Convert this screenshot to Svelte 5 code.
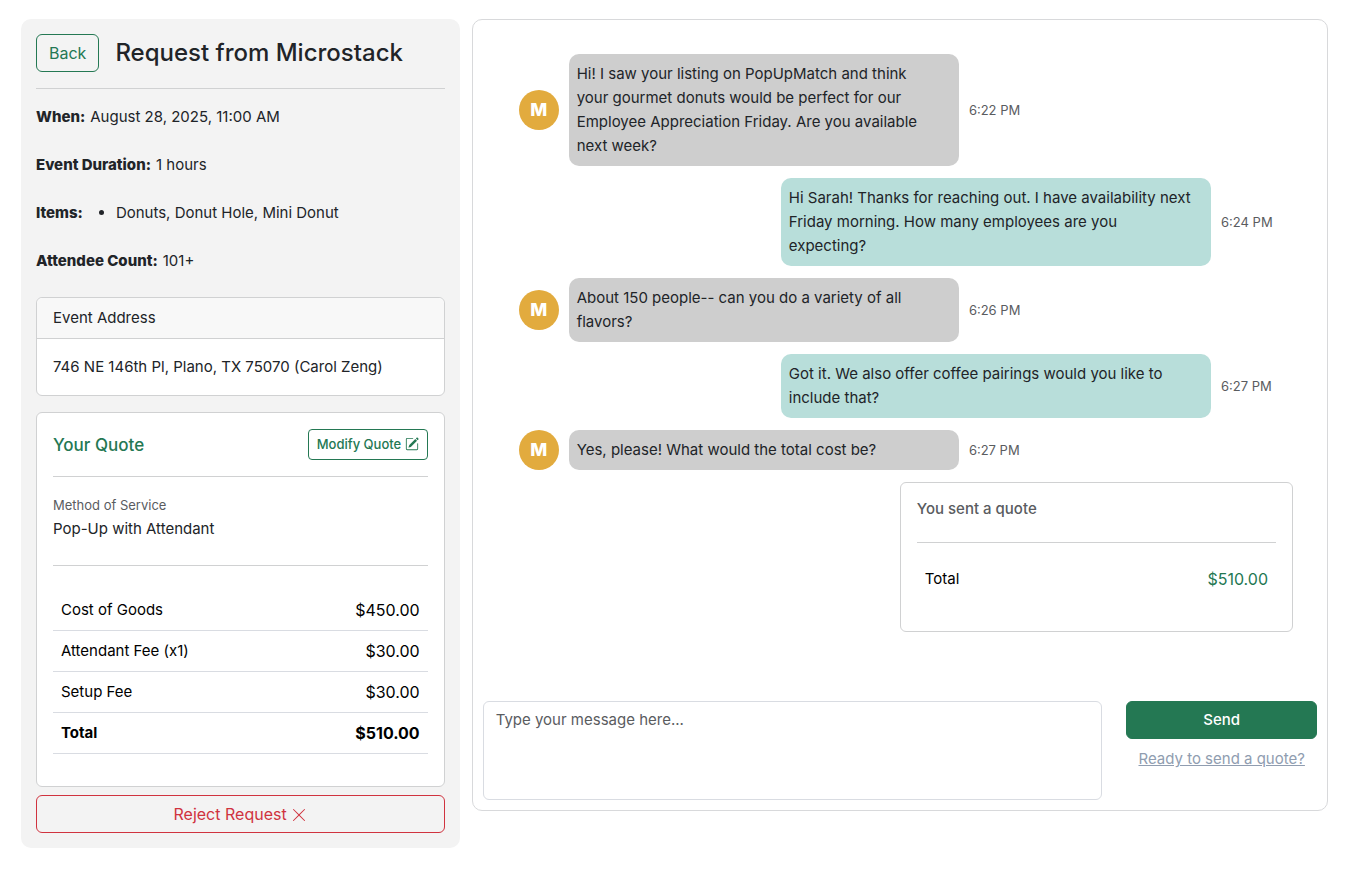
<script lang="ts">
  interface Message {
    sent: boolean;
    text: string;
    time: string;
  }

  const details = [
    { label: "When:", value: "August 28, 2025, 11:00 AM" },
    { label: "Event Duration:", value: "1 hours" },
    { label: "Items:", items: ["Donuts, Donut Hole, Mini Donut"] },
    { label: "Attendee Count:", value: "101+" },
  ];

  const fees = [
    { name: "Cost of Goods", amount: 450 },
    { name: "Attendant Fee (x1)", amount: 30 },
    { name: "Setup Fee", amount: 30 },
  ];

  const total = fees.reduce((sum, fee) => sum + fee.amount, 0);

  let messages = $state<Message[]>([
    {
      sent: false,
      text: "Hi! I saw your listing on PopUpMatch and think your gourmet donuts would be perfect for our Employee Appreciation Friday. Are you available next week?",
      time: "6:22 PM",
    },
    {
      sent: true,
      text: "Hi Sarah! Thanks for reaching out. I have availability next Friday morning. How many employees are you expecting?",
      time: "6:24 PM",
    },
    { sent: false, text: "About 150 people-- can you do a variety of all flavors?", time: "6:26 PM" },
    { sent: true, text: "Got it. We also offer coffee pairings would you like to include that?", time: "6:27 PM" },
    { sent: false, text: "Yes, please! What would the total cost be?", time: "6:27 PM" },
  ]);

  let draft = $state("");

  const money = (n: number) => `$${n.toFixed(2)}`;

  function send() {
    const text = draft.trim();
    if (!text) return;
    const time = new Date().toLocaleTimeString("en-US", { hour: "numeric", minute: "2-digit" });
    messages.push({ sent: true, text, time });
    draft = "";
  }
</script>

<main class="page">
  <aside class="sidebar">
    <header class="sidebar-header">
      <button class="btn btn-outline" type="button">Back</button>
      <h1>Request from Microstack</h1>
    </header>
    <hr />

    <div class="details">
      {#each details as detail}
        <div class="detail">
          <strong>{detail.label}</strong>
          {#if detail.items}
            <ul>
              {#each detail.items as item}
                <li>{item}</li>
              {/each}
            </ul>
          {:else}
            <span>{detail.value}</span>
          {/if}
        </div>
      {/each}
    </div>

    <section class="card address">
      <div class="card-header">Event Address</div>
      <div class="card-body">746 NE 146th Pl, Plano, TX 75070 (Carol Zeng)</div>
    </section>

    <section class="card quote" id="quote">
      <div class="quote-header">
        <h2>Your Quote</h2>
        <button class="btn btn-outline btn-sm" type="button">
          Modify Quote
          <svg class="icon" viewBox="0 0 16 16" fill="currentColor" aria-hidden="true">
            <path d="M15.502 1.94a.5.5 0 0 1 0 .706L14.459 3.69l-2-2L13.502.646a.5.5 0 0 1 .707 0l1.293 1.293zm-1.75 2.456-2-2L4.939 9.21a.5.5 0 0 0-.121.196l-.805 2.414a.25.25 0 0 0 .316.316l2.414-.805a.5.5 0 0 0 .196-.12l6.813-6.814z" />
            <path fill-rule="evenodd" d="M1 13.5A1.5 1.5 0 0 0 2.5 15h11a1.5 1.5 0 0 0 1.5-1.5v-6a.5.5 0 0 0-1 0v6a.5.5 0 0 1-.5.5h-11a.5.5 0 0 1-.5-.5v-11a.5.5 0 0 1 .5-.5H9a.5.5 0 0 0 0-1H2.5A1.5 1.5 0 0 0 1 2.5z" />
          </svg>
        </button>
      </div>
      <hr />
      <div class="method">
        <div class="method-label">Method of Service</div>
        <div>Pop-Up with Attendant</div>
      </div>
      <hr />
      <table class="fees">
        <tbody>
          {#each fees as fee}
            <tr>
              <td>{fee.name}</td>
              <td class="amount">{money(fee.amount)}</td>
            </tr>
          {/each}
          <tr class="total">
            <td>Total</td>
            <td class="amount">{money(total)}</td>
          </tr>
        </tbody>
      </table>
    </section>

    <button class="btn btn-danger" type="button">
      Reject Request
      <svg class="icon icon-x" viewBox="0 0 16 16" fill="currentColor" aria-hidden="true">
        <path d="M2.146 2.854a.5.5 0 1 1 .708-.708L8 7.293l5.146-5.147a.5.5 0 0 1 .708.708L8.707 8l5.147 5.146a.5.5 0 0 1-.708.708L8 8.707l-5.146 5.147a.5.5 0 0 1-.708-.708L7.293 8z" />
      </svg>
    </button>
  </aside>

  <section class="chat">
    <div class="messages">
      {#each messages as message}
        <div class="message" class:sent={message.sent}>
          {#if !message.sent}
            <div class="avatar">M</div>
          {/if}
          <div class="bubble">{message.text}</div>
          <time>{message.time}</time>
        </div>
      {/each}

      <div class="card sent-quote">
        <h3>You sent a quote</h3>
        <hr />
        <div class="sent-total">
          <span>Total</span>
          <span class="sent-amount">{money(total)}</span>
        </div>
      </div>
    </div>

    <div class="composer">
      <textarea bind:value={draft} placeholder="Type your message here..." aria-label="Message"></textarea>
      <div class="composer-actions">
        <button class="btn btn-send" type="button" onclick={send}>Send</button>
        <a href="#quote">Ready to send a quote?</a>
      </div>
    </div>
  </section>
</main>

<style>
  :global(body) {
    background: #fff;
  }

  .page {
    --green: #247853;
    --red: #d0333f;
    --line: #d0d1d2;
    --font: Inter, "Liberation Sans", sans-serif;
    display: grid;
    grid-template-columns: calc(100% / 3 + 3px) 1fr;
    gap: 12px;
    align-items: start;
    padding: 19px 21px;
    font-family: var(--font);
    font-size: 15px;
    line-height: 24px;
    color: #212428;
  }

  .page * {
    box-sizing: border-box;
  }

  h1,
  h2,
  h3 {
    margin: 0;
    font-weight: 500;
  }

  h1 {
    font-size: 24px;
    line-height: 28px;
  }

  h2 {
    font-size: 17px;
    line-height: 24px;
    color: var(--green);
  }

  h3 {
    font-size: 15px;
    line-height: 19px;
    color: #5a5c5f;
  }

  hr {
    height: 1px;
    margin: 16px 0;
    border: 0;
    background: var(--line);
  }

  .btn {
    padding: 6px 12px;
    border: 1px solid;
    border-radius: 6px;
    background: transparent;
    font-family: var(--font);
    font-size: 16px;
    line-height: 24px;
    cursor: pointer;
  }

  .btn-outline {
    border-color: var(--green);
    color: var(--green);
  }

  .btn-sm {
    padding: 4px 8px;
    border-radius: 4px;
    font-size: 13px;
    font-weight: 500;
    line-height: 21px;
  }

  .btn-danger {
    width: 100%;
    margin-top: 8px;
    border-color: var(--red);
    color: var(--red);
  }

  .btn-send {
    width: 100%;
    border-color: var(--green);
    background: var(--green);
    font-size: 15px;
    font-weight: 500;
    color: #fff;
  }

  .icon {
    width: 14px;
    height: 14px;
    vertical-align: -2px;
  }

  .icon-x {
    width: 16px;
    height: 16px;
    vertical-align: -3px;
  }

  .sidebar {
    padding: 15px;
    border-radius: 10px;
    background: #f3f3f3;
  }

  .sidebar-header {
    display: flex;
    align-items: center;
    gap: 16px;
  }

  .details {
    display: flex;
    flex-direction: column;
    gap: 24px;
    margin-bottom: 24px;
  }

  .detail {
    display: flex;
    gap: 5px;
  }

  .detail strong {
    font-weight: 800;
  }

  .detail ul {
    margin: 0;
    padding-left: 28px;
  }

  .card {
    border: 1px solid var(--line);
    border-radius: 6px;
    background: #fff;
  }

  .address {
    margin-bottom: 16px;
  }

  .card-header {
    padding: 8px 16px;
    border-bottom: 1px solid var(--line);
    border-radius: 6px 6px 0 0;
    background: #f8f8f8;
  }

  .card-body {
    padding: 16px;
  }

  .quote {
    padding: 16px 16px 32px;
  }

  .quote-header {
    display: flex;
    align-items: center;
    justify-content: space-between;
  }

  .method {
    margin-bottom: 24px;
  }

  .method-label {
    font-size: 13px;
    color: #5a5c5f;
  }

  .fees {
    width: 100%;
    margin-top: 24px;
    border-collapse: collapse;
    color: #000;
  }

  .fees td {
    padding: 8px;
    border-bottom: 1px solid #d9dce2;
  }

  .fees .amount {
    font-size: 16px;
    text-align: right;
  }

  .total {
    font-weight: 700;
  }

  .chat {
    border: 1px solid #d8d9db;
    border-radius: 10px;
  }

  .messages {
    display: flex;
    flex-direction: column;
    gap: 12px;
    padding: 34px 34px 59px;
  }

  .message {
    display: flex;
    align-items: center;
    gap: 10px;
    width: calc(100% * 2 / 3);
    padding: 0 12px;
  }

  .message.sent {
    align-self: flex-end;
    padding-right: 22px;
  }

  .avatar {
    display: grid;
    place-items: center;
    flex: none;
    width: 40px;
    height: 40px;
    border-radius: 50%;
    background: #e2ab3e;
    color: #fff;
    font-size: 18px;
    font-weight: 800;
  }

  .bubble {
    flex: 1;
    padding: 8px 24px 8px 8px;
    border-radius: 10px;
    background: #cecece;
  }

  .sent .bubble {
    padding-right: 16px;
    background: #b8deda;
  }

  time {
    flex: none;
    width: 50px;
    font-size: 13px;
    white-space: nowrap;
    color: #5a5c5f;
  }

  .sent-quote {
    align-self: flex-end;
    width: 50%;
    padding: 16px 16px 32px;
  }

  .sent-quote hr {
    margin-top: 24px;
  }

  .sent-total {
    display: flex;
    justify-content: space-between;
    padding: 8px;
    color: #000;
  }

  .sent-total .sent-amount {
    font-size: 16px;
    color: var(--green);
  }

  .composer {
    display: grid;
    grid-template-columns: repeat(4, 1fr);
    gap: 24px;
    padding: 10px;
  }

  .composer textarea {
    grid-column: span 3;
    height: 99px;
    padding: 6px 12px;
    border: 1px solid #d9dce2;
    border-radius: 6px;
    font-family: var(--font);
    font-size: 15px;
    line-height: 24px;
    color: #212428;
    resize: none;
  }

  .composer textarea::placeholder {
    color: #5a5c5f;
    opacity: 1;
  }

  .composer-actions {
    display: flex;
    flex-direction: column;
    align-items: center;
    gap: 8px;
  }

  .composer-actions a {
    color: #909db0;
    white-space: nowrap;
  }
</style>
